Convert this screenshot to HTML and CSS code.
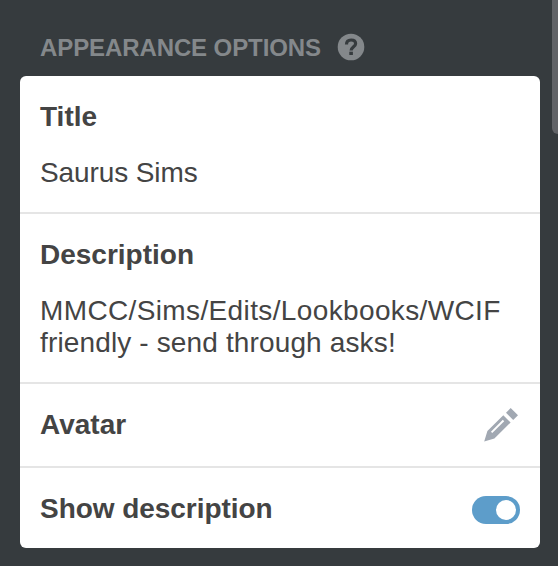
FILE: index.html
```html
<!DOCTYPE html>
<html lang="en">
<head>
<meta charset="utf-8">
<title>Appearance options</title>
<link rel="stylesheet" href="styles.css">
</head>
<body>
<main class="panel">
  <header class="heading">
    <h1>APPEARANCE OPTIONS</h1>
    <svg class="help" viewBox="0 0 28 28" aria-hidden="true">
      <circle cx="14" cy="14" r="13.3" fill="#84888b"/>
      <path d="M9.5 11.4C9.5 8.4 11.3 7 14.1 7S18.6 8.5 18.6 10.7C18.6 13.5 14.1 13.9 14.1 17.5" fill="none" stroke="#363b3e" stroke-width="3.2"/>
      <rect x="12.3" y="18.7" width="3.6" height="3.3" fill="#363b3e"/>
    </svg>
  </header>
  <section class="card">
    <div class="row">
      <h2>Title</h2>
      <p class="name">Saurus Sims</p>
    </div>
    <div class="row">
      <h2>Description</h2>
      <p><span class="wide">MMCC/Sims/Edits/Lookbooks/WCIF</span><br><span class="loose">friendly - send through asks!</span></p>
    </div>
    <div class="row inline avatar">
      <h2>Avatar</h2>
      <svg class="pencil" viewBox="0 0 36 36" aria-hidden="true">
        <path fill="#a1a8b2" d="M26.7 2L34 9.3L29.2 14L22 6.8ZM19.3 9.2L26.6 16.5L10.4 32.6L.2 35.5L3.4 25Z"/>
        <path stroke="#fff" stroke-width="1.9" d="M7.6 26.4L19.5 14.5"/>
      </svg>
    </div>
    <div class="row inline">
      <h2 class="show">Show description</h2>
      <span class="toggle"><span class="knob"></span></span>
    </div>
  </section>
</main>
<div class="scrollbar"></div>
</body>
</html>
```
FILE: styles.css
```css
* { box-sizing: border-box; }

body {
  margin: 0;
  height: 566px;
  overflow: hidden;
  background: #363b3e;
  color: #444;
  font: 28px/32px "Liberation Sans", Arial, sans-serif;
}

.panel { width: 540px; padding: 32px 0 0 20px; }

.heading {
  display: flex;
  align-items: center;
  height: 44px;
  padding: 0 20px 14px;
}

h1 {
  width: 297px;
  margin: 0;
  padding-top: 2px;
  color: #84888b;
  font-size: 24px;
  letter-spacing: -0.1px;
  white-space: nowrap;
}

.help { width: 28px; height: 28px; }

.card { overflow: hidden; border-radius: 6px; background: #fff; }

.row { padding: 25px 20px 23px; }
.row + .row { border-top: 2px solid #e5e5e5; }

h2 { margin: 0; font-size: 28px; }
p { margin: 24px 0 0; white-space: nowrap; }

.name { letter-spacing: -0.1px; }
.wide { letter-spacing: 0.37px; }
.loose { letter-spacing: 0.14px; }
.show { letter-spacing: -0.05px; }

.inline { display: flex; justify-content: space-between; height: 82px; }
.avatar { height: 84px; }

.pencil { width: 36px; height: 36px; margin-top: -3px; }

.toggle {
  display: flex;
  justify-content: flex-end;
  width: 48px;
  height: 28px;
  margin-top: 3px;
  padding: 4px;
  border-radius: 14px;
  background: #5d9dca;
}

.knob { width: 20px; height: 20px; border-radius: 50%; background: #fff; }

.scrollbar {
  position: absolute;
  top: -10px;
  right: -6px;
  width: 12px;
  height: 144px;
  border-radius: 6px;
  background: #616367;
}
```
